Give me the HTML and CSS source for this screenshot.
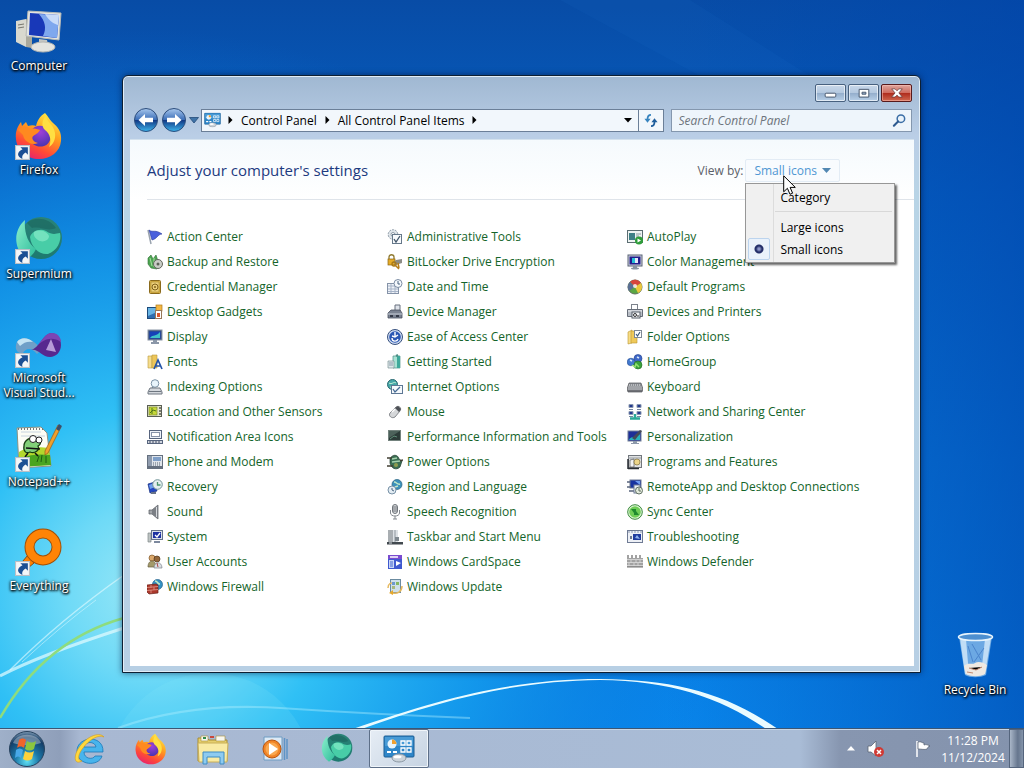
FILE: index.html
```html
<!DOCTYPE html>
<html lang="en">

<head>
  <meta charset="UTF-8">
  <meta name="viewport" content="width=device-width, initial-scale=1.0">
  <title>All Control Panel Items</title>
  <link rel="stylesheet" href="styles.css">
</head>

<body>

  <!-- Shared icons -->
  <svg class="sprites" aria-hidden="true">
    <defs>
      <linearGradient id="ffFlame" x1="0.8" y1="0" x2="0.3" y2="1">
        <stop offset="0" stop-color="#fff04a" />
        <stop offset="0.4" stop-color="#ffa01e" />
        <stop offset="0.75" stop-color="#ff4a36" />
        <stop offset="1" stop-color="#e8226e" />
      </linearGradient>
      <radialGradient id="ffGlobe" cx="0.5" cy="0.3" r="0.7">
        <stop offset="0" stop-color="#a040d8" />
        <stop offset="1" stop-color="#4a34b0" />
      </radialGradient>
      <linearGradient id="smBody" x1="0" y1="0" x2="0" y2="1">
        <stop offset="0" stop-color="#2a8377" />
        <stop offset="1" stop-color="#1d7a70" />
      </linearGradient>
      <linearGradient id="smLight" x1="0" y1="0" x2="1" y2="1">
        <stop offset="0" stop-color="#8cf0cd" />
        <stop offset="1" stop-color="#2dbb99" />
      </linearGradient>
    </defs>
    <symbol id="firefox" viewBox="0 0 48 48">
      <path fill="url(#ffFlame)" d="M30 1c3 3 4 6 7 9 6 5 10 10 9 19C45 40 35 47 24 47 12 47 2 39 1 27 0 19 3 14 6 10l1 4 4-4 2 4c3-1 6-1 8 0 1-5 4-10 9-13z" />
      <path fill="url(#ffGlobe)" d="M16 19c3-6 12-7 17-2 5 5 3 15-4 17-6 2-13-1-14-8l6-4z" />
      <path fill="#ff8a20" d="M3 18c4-4 9-4 12-1 3-1 7 0 10 1-2 4-5 4-7 6-2 3 1 6 5 7-7 3-14-2-15-8z" />
      <path fill="#ffdf42" d="M31 3c0 7 8 9 9 18 1 6-2 12-6 14 3-7 1-13-4-17-4-4-3-10 1-15z" />
    </symbol>
    <symbol id="supermium" viewBox="0 0 48 48">
      <circle cx="26" cy="22" r="21" fill="url(#smBody)" />
      <path fill="url(#smLight)" d="M10 4C-2 14-2 34 12 43c3-2 7-5 9-10C12 27 9 15 10 4z" />
      <path fill="#48cda7" d="M15 21c2-6 10-9 16-6 6 4 9 3 14 2 2 8-3 18-12 21-9 1-17-7-18-17z" />
      <path fill="#86ebc8" opacity="0.7" d="M19 16c5-3 13-1 15 4 0 5-7 7-11 4-3-2-5-5-4-8z" />
      <path fill="#1d685f" d="M12 7c8-7 22-5 29 5-9 4-15-2-24 0z" opacity="0.7" />
    </symbol>
    <symbol id="cpanel" viewBox="0 0 32 28">
      <rect x="1" y="1" width="30" height="21" rx="1" fill="#2f86c8" stroke="#1c5e95" />
      <rect x="2" y="2" width="28" height="9" fill="#5aaae0" opacity="0.6" />
      <circle cx="9" cy="9" r="4.500" fill="#e9f5fc" />
      <path d="M9 9V4.500A4.500 4.500 0 0 1 13.500 9z" fill="#f0a030" />
      <path d="M4 17h4M10 17h4" stroke="#fff" stroke-width="2" />
      <path d="M18 6h4v4h-4zM24 6h4v4h-4zM18 13h4v4h-4zM24 13h4v4h-4z" fill="none" stroke="#fff" stroke-width="1.300" />
      <ellipse cx="16" cy="23" rx="7" ry="4" fill="#cbd3da" stroke="#8b98a4" />
      <ellipse cx="14.500" cy="21.800" rx="4" ry="1.500" fill="#fff" />
    </symbol>
    <symbol id="shortcut" viewBox="0 0 14 14">
      <rect x="0.500" y="0.500" width="13" height="13" fill="#f4f6f8" stroke="#b9bfc6" />
      <path d="M5 2h7v7l-2-2c-2 1-4 3-3 6-5-2-6-6 0-9z" fill="#1b4f94" />
    </symbol>
  </svg>

  <div class="desktop">

    <!-- Wallpaper -->
    <svg class="wallpaper" viewBox="0 0 1024 768" preserveAspectRatio="none" aria-hidden="true">
      <defs>
        <linearGradient id="sky" x1="0" y1="0" x2="0" y2="1">
          <stop offset="0" stop-color="#084ca6" />
          <stop offset="0.25" stop-color="#0661c4" />
          <stop offset="0.6" stop-color="#0778dc" />
          <stop offset="1" stop-color="#0988ee" />
        </linearGradient>
        <radialGradient id="glow" gradientUnits="userSpaceOnUse" cx="150" cy="590" r="560">
          <stop offset="0" stop-color="#9ae8f6" />
          <stop offset="0.15" stop-color="#6fdaf7" />
          <stop offset="0.32" stop-color="#30c0f5" />
          <stop offset="0.6" stop-color="#159cec" stop-opacity="0.8" />
          <stop offset="1" stop-color="#0a70d4" stop-opacity="0" />
        </radialGradient>
        <linearGradient id="shade" x1="0" y1="0" x2="1" y2="0">
          <stop offset="0.65" stop-color="#0048b0" stop-opacity="0" />
          <stop offset="1" stop-color="#0044aa" stop-opacity="0.6" />
        </linearGradient>
      </defs>
      <rect width="1024" height="768" fill="url(#sky)" />
      <rect width="1024" height="768" fill="url(#glow)" />
      <rect width="1024" height="768" fill="url(#shade)" />
      <path d="M560 0h130l120 76H700z" fill="#2b85dc" opacity="0.080" />
      <circle cx="210" cy="775" r="102" fill="#8fe8fa" opacity="0.150" />
      <path d="M118 728Q190 702 280 708T470 718" fill="none" stroke="#b4f0ff" stroke-width="2" opacity="0.400" />
      <path d="M0 676Q40 655 124 628" fill="none" stroke="#e6fcff" stroke-width="3" opacity="0.700" />
      <path d="M10 670Q60 620 124 575" fill="none" stroke="#e6fcff" stroke-width="1.500" opacity="0.600" />
      <path d="M22 662Q62 625 96 600" fill="none" stroke="#e6fcff" stroke-width="1" opacity="0.500" />
      <path d="M0 718Q45 640 124 618" fill="none" stroke="#8edc7e" stroke-width="2.500" />
      <path d="M350 730C450 695 520 679 600 679C675 680 725 692 781 731L769 731C722 698 672 681 600 680C520 681 450 697 356 731z" fill="#e9fbff" />
    </svg>

    <!-- Desktop shortcuts -->
    <ul class="shortcuts">
      <li>
        <a href="#" class="shortcut">
          <svg class="shortcut-icon" viewBox="0 0 48 48">
            <path d="M1 13l10-2v28l-10-5z" fill="#d9d9cf" />
            <path d="M11 11l6 3v26l-6-1z" fill="#aaa99d" />
            <path d="M3 17l6-1M3 20l6-1" stroke="#77776f" />
            <path d="M13 3l33 2-2 27-33-4z" fill="#e4e5e0" stroke="#b7bab8" />
            <path d="M15 5l29 2-2 23-28-3z" fill="#1838b8" />
            <path d="M24 6l20 1-2 23-14-2c4-8 2-15-4-22z" fill="#7fa8ee" />
            <path d="M30 6l14 1-1 10c-4-1-9-4-13-11z" fill="#dce9fb" opacity="0.800" />
            <path d="M24 31l8 1 1 5h-9z" fill="#c4c6c3" />
            <ellipse cx="28" cy="39" rx="12" ry="5" fill="#e3e4e0" stroke="#b4b6b3" />
          </svg>
          <span>Computer</span>
        </a>
      </li>
      <li>
        <a href="#" class="shortcut">
          <svg class="shortcut-icon" viewBox="0 0 48 48">
            <use href="#firefox" width="48" height="48" />
            <use href="#shortcut" y="33" width="15" height="15" />
          </svg>
          <span>Firefox</span>
        </a>
      </li>
      <li>
        <a href="#" class="shortcut">
          <svg class="shortcut-icon" viewBox="0 0 48 48">
            <use href="#supermium" width="48" height="48" />
            <use href="#shortcut" y="33" width="15" height="15" />
          </svg>
          <span>Supermium</span>
        </a>
      </li>
      <li>
        <a href="#" class="shortcut">
          <svg class="shortcut-icon" viewBox="0 0 48 48">
            <path d="M1 25c1-8 11-9 18-3l8 7-5 5c-6-8-12-5-14-1-5 1-8-3-7-8z" fill="#6fa0c8" />
            <path d="M2 22c4-6 12-4 16 0-5-1-9 0-13 4z" fill="#c3e4f4" />
            <path d="M16 30c8-2 12-16 20-17 6 0 10 5 10 12s-5 12-11 12c-8 0-12-9-19-7z" fill="#57288f" />
            <path d="M22 26c5-5 8-13 15-13 6 0 9 5 9 9-9-6-17-3-24 4z" fill="#7c45b4" />
            <path d="M36 19l5 13-10-2z" fill="#b79bd8" />
            <use href="#shortcut" y="33" width="15" height="15" />
          </svg>
          <span>Microsoft Visual Stud...</span>
        </a>
      </li>
      <li>
        <a href="#" class="shortcut">
          <svg class="shortcut-icon" viewBox="0 0 48 48">
            <path d="M2 4l24-1 6 6 4 33-32 2z" fill="#fcfdf5" stroke="#8b9183" />
            <path d="M3 5h25" stroke="#777" stroke-width="2" stroke-dasharray="1 2" />
            <path d="M6 8h20M6 12h24" stroke="#c8d4e0" />
            <path d="M4 28c8-6 22-5 30-4l2 17-32 2z" fill="#b3d72e" />
            <path d="M6 34c10-4 20-4 29-3l1 10-32 2z" fill="#4aa520" />
            <path d="M9 22c0-6 7-10 12-7 5-2 6 5 2 7 2 4-3 8-8 6-4 2-7-1-6-6z" fill="#82cf78" stroke="#173d10" stroke-width="1.300" />
            <circle cx="18" cy="15" r="3.500" fill="#fff" stroke="#222" />
            <circle cx="24" cy="16" r="3" fill="#fff" stroke="#222" />
            <path d="M11 24l14 1M13 29l-3 4M20 29l3 3" stroke="#111" stroke-width="1.500" />
            <path d="M22 38l2-6M26 38l1-7M31 39v-7" stroke="#1e5e10" />
            <path d="M43 1l3 2-13 26-3 2v-4z" fill="#f0a02c" stroke="#9b5a16" stroke-width="0.700" />
            <path d="M41 5l3-5 3 2-3 5z" fill="#3a4f6e" />
            <use href="#shortcut" y="33" width="15" height="15" />
          </svg>
          <span>Notepad++</span>
        </a>
      </li>
      <li>
        <a href="#" class="shortcut">
          <svg class="shortcut-icon" viewBox="0 0 48 48">
            <path d="M13 27l6 8-12 10-5-5z" fill="#ff8000" stroke="#8a4a10" />
            <circle cx="28" cy="19" r="13.500" fill="none" stroke="#a05008" stroke-width="10" />
            <circle cx="28" cy="19" r="13.500" fill="none" stroke="#ff8406" stroke-width="8" />
            <use href="#shortcut" y="33" width="15" height="15" />
          </svg>
          <span>Everything</span>
        </a>
      </li>
    </ul>

    <a href="#" class="shortcut recycle-bin">
      <svg class="shortcut-icon" viewBox="0 0 48 48">
        <path d="M8 5l33 0-6 38c-6 3-16 3-21 0z" fill="#8fc0ec" opacity="0.750" />
        <path d="M9 6l5 36 4 1-3-36zM40 6l-6 36-4 1 4-36z" fill="#e4f3fd" opacity="0.700" />
        <path d="M17 14l5 16M33 16l-10 14M21 12l9 16" stroke="#2b62b8" opacity="0.500" />
        <path d="M13 34c4-4 8-1 11-3s8-1 12 2l-2 9c-5 3-14 3-19 0z" fill="#efe9e2" />
        <path d="M18 36l7 2 6-3M16 40l6 1" stroke="#c28a72" />
        <ellipse cx="24.500" cy="5" rx="17" ry="3.500" fill="#4d8fd0" stroke="#e6f3fc" stroke-width="1.500" />
      </svg>
      <span>Recycle Bin</span>
    </a>

    <!-- Control Panel window -->
    <main class="window">
      <div class="caption">
        <button type="button" class="caption-button" aria-label="Minimize">
          <svg viewBox="0 0 30 16"><rect x="9.500" y="8.500" width="11" height="4" rx="1" fill="#fff" stroke="#46566c" /></svg>
        </button>
        <button type="button" class="caption-button" aria-label="Maximize">
          <svg viewBox="0 0 30 16"><path fill-rule="evenodd" d="M10.500 4.500h10v8h-10zM13.500 7.500v2h4v-2z" fill="#fff" stroke="#46566c" /></svg>
        </button>
        <button type="button" class="caption-button close" aria-label="Close">
          <svg viewBox="0 0 30 16"><path d="M10 4h3.500l2 2 2-2H21l-3.500 4.200L21 12.500h-3.500l-2-2-2 2H10l3.500-4.300z" fill="#fff" stroke="#6b3a3a" stroke-width="0.800" /></svg>
        </button>
      </div>

      <div class="navbar">
        <button type="button" class="travel" aria-label="Back">
          <svg viewBox="0 0 26 26">
            <defs>
              <linearGradient id="orb" x1="0" y1="0" x2="0" y2="1">
                <stop offset="0" stop-color="#a8c8ee" />
                <stop offset="0.480" stop-color="#3d6fb8" />
                <stop offset="0.520" stop-color="#123a86" />
                <stop offset="1" stop-color="#3cb4ec" />
              </linearGradient>
            </defs>
            <circle cx="13" cy="13" r="11.500" fill="url(#orb)" stroke="#2d4d7c" />
            <path d="M5.500 13l6.500-6v3.700h8v4.600h-8V19z" fill="#fff" />
          </svg>
        </button>
        <button type="button" class="travel" aria-label="Forward">
          <svg viewBox="0 0 26 26">
            <circle cx="13" cy="13" r="11.500" fill="url(#orb)" stroke="#2d4d7c" />
            <path d="M20.500 13L14 7v3.700H6v4.600h8V19z" fill="#fff" />
          </svg>
        </button>
        <button type="button" class="history" aria-label="Recent pages">
          <svg viewBox="0 0 10 8"><path d="M0.500 1.500h9L5 7z" fill="#3f74a8" stroke="#234b78" stroke-width="0.800" /></svg>
        </button>

        <nav class="address">
          <svg class="address-icon" viewBox="0 0 32 28"><use href="#cpanel" /></svg>
          <svg class="crumb-arrow" viewBox="0 0 5 8"><path d="M0.500 0l4 4-4 4z" /></svg>
          <a href="#" class="crumb">Control Panel</a>
          <svg class="crumb-arrow" viewBox="0 0 5 8"><path d="M0.500 0l4 4-4 4z" /></svg>
          <a href="#" class="crumb">All Control Panel Items</a>
          <svg class="crumb-arrow" viewBox="0 0 5 8"><path d="M0.500 0l4 4-4 4z" /></svg>
          <button type="button" class="address-drop" aria-label="Previous locations">
            <svg viewBox="0 0 8 5"><path d="M0 0h8L4 4.500z" /></svg>
          </button>
          <button type="button" class="refresh" aria-label="Refresh">
            <svg viewBox="0 0 16 16">
              <path d="M8 2C5 2 4 4 4 7" fill="none" stroke="#3784bf" stroke-width="2" />
              <path d="M0.500 6.500h7L4 11z" fill="#3784bf" />
              <path d="M8 15c3 0 4-2 4-5" fill="none" stroke="#1e5d9c" stroke-width="2" />
              <path d="M8.500 10.500h7L12 6z" fill="#1e5d9c" />
            </svg>
          </button>
        </nav>

        <div class="search">
          <input type="search" aria-label="Search Control Panel" placeholder="Search Control Panel">
          <svg viewBox="0 0 16 16" aria-hidden="true">
            <circle cx="9.500" cy="6" r="4" fill="#e9f3fb" stroke="#3b6ea6" stroke-width="1.600" />
            <path d="M6.500 9L2 13.500" stroke="#2d5a90" stroke-width="2.200" stroke-linecap="round" />
          </svg>
        </div>
      </div>

      <section class="client">
        <header class="page-header">
          <h1>Adjust your computer's settings</h1>
          <div class="view-by">
            <span>View by:</span>
            <div class="view-picker">
              <button type="button" class="view-button" aria-haspopup="true" aria-expanded="true">
                Small icons
                <svg viewBox="0 0 9 5"><path d="M0 0h9L4.500 5z" /></svg>
              </button>
              <div class="menu">
                <label class="menu-item"><input type="radio" name="view"><span>Category</span></label>
                <hr>
                <label class="menu-item"><input type="radio" name="view"><span>Large icons</span></label>
                <label class="menu-item"><input type="radio" name="view" checked><span>Small icons</span></label>
              </div>
              <svg class="cursor" viewBox="0 0 13 20" aria-hidden="true">
                <path d="M0.700 0.800v16l3.700-3.500 2.600 6 2.600-1.100-2.500-5.800h5.200z" fill="#fff" stroke="#000" />
              </svg>
            </div>
          </div>
        </header>

        <ul class="items">
          <li><a href="#"><svg viewBox="0 0 16 16"><path d="M1 1l3 14" stroke="#9aa3ae" stroke-width="1.500" /><path d="M2 1c4 3 6-1 13 4-4 0-5 5-10 6z" fill="#4a60dc" stroke="#27379c" stroke-width="0.600" /></svg>Action Center</a></li>
          <li><a href="#"><svg viewBox="0 0 16 16"><circle cx="6" cy="5.500" r="4.800" fill="#dfe5ea" stroke="#8d9aa6" stroke-dasharray="2 1" /><circle cx="6" cy="5.500" r="2" fill="#fff" stroke="#8d9aa6" /><rect x="5.500" y="5.500" width="9" height="9" fill="#f8fafc" stroke="#66788a" /><path d="M7 10l2 3 4-6" fill="none" stroke="#42566a" stroke-width="1.300" /></svg>Administrative Tools</a></li>
          <li><a href="#"><svg viewBox="0 0 16 16"><rect x="0.500" y="1.500" width="15" height="12" fill="#eef3f2" stroke="#5b6d72" /><rect x="2" y="4" width="6" height="7" fill="#3e7f86" /><path d="M9 5h5M9 7h3" stroke="#8a9aa0" /><circle cx="12" cy="11.500" r="4" fill="#2f9d3a" /><path d="M10.500 9.500v4l3.500-2z" fill="#fff" /></svg>AutoPlay</a></li>
          <li><a href="#"><svg viewBox="0 0 16 16"><path d="M1 4l3-3 2 4 3-4 2 6-1 8-6-1-3-4z" fill="#4da552" stroke="#2b6b33" stroke-width="0.600" /><path d="M3 4l2 8M7 4v9" stroke="#a8e0a0" /><circle cx="11" cy="10" r="4.500" fill="#c9ccc6" stroke="#62665e" /><circle cx="11" cy="10" r="1.500" fill="#5b6156" /></svg>Backup and Restore</a></li>
          <li><a href="#"><svg viewBox="0 0 16 16"><path d="M2 5V3c0-3 5-3 5 0v2" fill="none" stroke="#8f7a30" stroke-width="1.300" /><rect x="1" y="5" width="7" height="6" fill="#e6ac28" stroke="#8b6412" stroke-width="0.700" /><path d="M6 8l3-2 6-1v4l-6 2z" fill="#8d8d87" /><circle cx="7" cy="10" r="2" fill="none" stroke="#a87816" stroke-width="1.300" /><path d="M8 11l4 4M11 9l1 5" stroke="#b67d18" stroke-width="1.500" /></svg>BitLocker Drive Encryption</a></li>
          <li><a href="#"><svg viewBox="0 0 16 16"><rect x="1" y="1" width="14" height="11" fill="#ccd2dc" stroke="#5a6377" /><rect x="2.500" y="2.500" width="11" height="8" fill="#241c8c" /><rect x="5" y="4" width="3" height="5" fill="#23c0d8" /><rect x="8" y="4" width="3" height="5" fill="#e6e6fa" /><path d="M6 12h4v2H6z" fill="#8792a2" /><ellipse cx="8" cy="14.500" rx="4" ry="1" fill="#8792a2" /></svg>Color Management</a></li>
          <li><a href="#"><svg viewBox="0 0 16 16"><rect x="2.500" y="1.500" width="11" height="13" rx="1" fill="#d9b347" stroke="#8a6a1c" /><rect x="4" y="3" width="8" height="10" fill="#ecd07a" stroke="#a3822e" stroke-width="0.600" /><circle cx="8" cy="8" r="3" fill="none" stroke="#80601a" /><circle cx="8" cy="8" r="1" fill="#80601a" /></svg>Credential Manager</a></li>
          <li><a href="#"><svg viewBox="0 0 16 16"><rect x="0.500" y="4.500" width="11" height="10" fill="#eef2f8" stroke="#8593a8" /><path d="M1 7h10M1 10h10M1 12.500h10M4 5v9M8 5v9" stroke="#a7b4c8" /><circle cx="11" cy="4.500" r="4" fill="#f5f9fd" stroke="#7a8ba2" /><path d="M11 2v3h2" fill="none" stroke="#47617f" /></svg>Date and Time</a></li>
          <li><a href="#"><svg viewBox="0 0 16 16"><circle cx="8" cy="8" r="7" fill="#5aa743" stroke="#61705c" /><path d="M8 8L3 3a7 7 0 0 1 11 1z" fill="#d8443c" /><path d="M8 8L3 3a7 7 0 0 0-1 9z" fill="#5a6f94" /><path d="M8 8l6-4c2 4 1 8-3 10z" fill="#ecc73e" /><circle cx="8" cy="7" r="2" fill="#fff" opacity="0.800" /></svg>Default Programs</a></li>
          <li><a href="#"><svg viewBox="0 0 16 16"><rect x="0.500" y="3.500" width="10" height="11" fill="#2f6cae" stroke="#1c4a7a" /><path d="M1 4h9v4L1 12z" fill="#68b4e4" /><rect x="9" y="1" width="6" height="6" fill="#f4b844" stroke="#b07a1a" stroke-width="0.700" /><rect x="8.500" y="6.500" width="6" height="8" fill="#fff" stroke="#98785a" /><path d="M10 9h3v4h-3z" fill="#d9572f" /></svg>Desktop Gadgets</a></li>
          <li><a href="#"><svg viewBox="0 0 16 16"><path d="M8 6V1h5v6" fill="#dfe3ea" stroke="#68707e" /><path d="M1 9l3-3h9l2 3v5H1z" fill="#7b8392" stroke="#4a5160" stroke-width="0.800" /><path d="M1 10h14" stroke="#c6ccd6" /><path d="M3 12h3M9 12h3" stroke="#343a48" stroke-width="2" /></svg>Device Manager</a></li>
          <li><a href="#"><svg viewBox="0 0 16 16"><rect x="4.500" y="0.500" width="6" height="6" fill="#fff" stroke="#7c828b" /><path d="M0.500 5.500h15v7H.5z" fill="#b9bec6" stroke="#666d78" /><path d="M1 7h14" stroke="#eceff2" /><rect x="5" y="8" width="8" height="6" fill="#f5f6f8" stroke="#555c66" /><circle cx="8" cy="11" r="1.500" fill="none" stroke="#333" /><path d="M10 12h2" stroke="#333" /></svg>Devices and Printers</a></li>
          <li><a href="#"><svg viewBox="0 0 16 16"><rect x="1" y="1" width="14" height="10" fill="#39507c" stroke="#8a95a6" /><path d="M2.500 2.500h11v7h-11z" fill="#1641b8" /><path d="M3 9c3-4 6-1 10-6v6z" fill="#3ec2c8" /><path d="M6 11h4v2H6z" fill="#8b97a8" /><path d="M4 14h8" stroke="#8b97a8" stroke-width="2" /></svg>Display</a></li>
          <li><a href="#"><svg viewBox="0 0 16 16"><circle cx="8" cy="8" r="7.500" fill="#cfdcf2" stroke="#37507e" /><circle cx="8" cy="8" r="5.800" fill="#2b58b4" /><path d="M8 3v5M5 7l3 1 3-2M5 9c0 4 5 4 6 1" fill="none" stroke="#fff" stroke-width="1.400" /></svg>Ease of Access Center</a></li>
          <li><a href="#"><svg viewBox="0 0 16 16"><path d="M1 3l4-2v13l-4 1z" fill="#f7dc84" stroke="#b8932f" stroke-width="0.600" /><path d="M4 2h6v12H4z" fill="#efc95a" stroke="#b8932f" stroke-width="0.600" /><rect x="7.500" y="1.500" width="7" height="7" fill="#fff" stroke="#7d8896" /><path d="M9 5l1.500 2L13 3" fill="none" stroke="#3c5878" stroke-width="1.200" /></svg>Folder Options</a></li>
          <li><a href="#"><svg viewBox="0 0 16 16"><path d="M1 2h4v12H1z" fill="#f6dd8c" stroke="#b9973c" stroke-width="0.600" /><path d="M5 1h5v13H5z" fill="#edc65a" stroke="#b9973c" stroke-width="0.600" /><path d="M7 15l4-9 4 9M8.500 12h5" fill="none" stroke="#2454a8" stroke-width="1.700" /></svg>Fonts</a></li>
          <li><a href="#"><svg viewBox="0 0 16 16"><path d="M6 2h7v12H6z" fill="#a9e2d4" stroke="#4e8f86" stroke-width="0.700" /><path d="M10 2h3v12h-3z" fill="#3fa99b" /><path d="M1 7h6v7H1z" fill="#dfe9ea" stroke="#7b9496" stroke-width="0.700" /><path d="M2 9h4M2 11h4" stroke="#89a" /><path d="M9 2l2-1" stroke="#4e8f86" stroke-width="2" /></svg>Getting Started</a></li>
          <li><a href="#"><svg viewBox="0 0 16 16"><circle cx="4" cy="8" r="3.800" fill="#4279cf" stroke="#254c92" stroke-width="0.600" /><circle cx="11" cy="4.500" r="4" fill="#3f68c8" stroke="#243f8a" stroke-width="0.600" /><circle cx="11" cy="11" r="4" fill="#3aa23a" stroke="#1f6a25" stroke-width="0.600" /><path d="M5 11l3 2 1-3 3 3" fill="none" stroke="#92e070" stroke-width="1.500" /><path d="M3 6l2 1M10 3l2 1" stroke="#d7e7fb" stroke-width="1.500" /></svg>HomeGroup</a></li>
          <li><a href="#"><svg viewBox="0 0 16 16"><circle cx="8" cy="4.500" r="3.800" fill="#e8f4fb" stroke="#7c93a6" /><path d="M6 8l-2 3" stroke="#7c93a6" stroke-width="1.500" /><path d="M1 13l2-4h10l2 4v2H1z" fill="#d4d8dd" stroke="#6e7680" /><path d="M2 12.500h12" stroke="#6e7680" /></svg>Indexing Options</a></li>
          <li><a href="#"><svg viewBox="0 0 16 16"><circle cx="5.500" cy="5.500" r="5" fill="#46a8a8" stroke="#2a6870" /><path d="M2 4c3 2 5-2 7 0M3 8l4 1" stroke="#c7f0d8" fill="none" /><rect x="4.500" y="6.500" width="11" height="8" fill="#f6f9fc" stroke="#5d7794" /><path d="M6 10l2 3 5-5" fill="none" stroke="#466b94" stroke-width="1.300" /></svg>Internet Options</a></li>
          <li><a href="#"><svg viewBox="0 0 16 16"><path d="M2 4h12l2 6-1 3H1l-1-3z" fill="#8b8e93" stroke="#515459" stroke-width="0.700" /><path d="M2 6h12M1.500 8h13M1.500 10h13" stroke="#e5e7ea" stroke-dasharray="1 1" /><path d="M1 12h14" stroke="#54575c" /></svg>Keyboard</a></li>
          <li><a href="#"><svg viewBox="0 0 16 16"><rect x="0.500" y="1.500" width="14" height="11" fill="#e4e7c8" stroke="#5a5f54" /><rect x="2" y="3" width="8" height="8" fill="#c5d838" stroke="#6e7a28" stroke-width="0.600" /><path d="M3 9l3-3 3 1M5 4v6" stroke="#4d7419" fill="none" /><path d="M12 4h2M12 7h2M12 10h2" stroke="#555" stroke-width="1.500" /></svg>Location and Other Sensors</a></li>
          <li><a href="#"><svg viewBox="0 0 16 16"><path d="M3 9l6-6c3-2 6 1 4 4l-5 6c-3 2-7-1-5-4z" fill="#d5d7d9" stroke="#6c7075" stroke-width="0.800" /><path d="M8 4l4 4 2-3-3-3z" fill="#4c5055" /><path d="M5 8l3-3" stroke="#fff" stroke-width="1.500" /></svg>Mouse</a></li>
          <li><a href="#"><svg viewBox="0 0 16 16"><path d="M2 0.500h4v3H2zM10 0.500h4v3h-4zM2 7.500h4v3H2zM10 7.500h4v3h-4z" fill="#23388c" stroke="#8998b0" /><path d="M2 5.500h4M10 5.500h4M2 12.500h4M10 12.500h4" stroke="#7787a0" /><path d="M8 10v4M3 14.500h10" stroke="#2ba897" stroke-width="2.500" /></svg>Network and Sharing Center</a></li>
          <li><a href="#"><svg viewBox="0 0 16 16"><rect x="2.500" y="1.500" width="12" height="8" fill="#edf2f9" stroke="#57657e" /><rect x="4.500" y="3.500" width="8" height="4" fill="#fff" stroke="#8793a8" /><rect x="0.500" y="11.500" width="15" height="3" fill="#d0d5de" stroke="#57657e" /><path d="M2 13h12" stroke="#414b62" stroke-dasharray="2 1" /></svg>Notification Area Icons</a></li>
          <li><a href="#"><svg viewBox="0 0 16 16"><rect x="1.500" y="1.500" width="12" height="10" fill="#2c3b38" stroke="#73827d" /><path d="M2 2h11l-11 7z" fill="#4d625b" /><path d="M3 10l4-3 3 1" stroke="#5f8d78" fill="none" /></svg>Performance Information and Tools</a></li>
          <li><a href="#"><svg viewBox="0 0 16 16"><rect x="1" y="2" width="13" height="10" fill="#1d2f98" stroke="#717f96" /><path d="M2 11c2-5 6-1 11-6v6z" fill="#27b2bd" /><path d="M5 9l8-8 2 1-7 9z" fill="#454a58" /><path d="M6 12h4v2H6zM4 14h8v1H4z" fill="#8e9aab" /></svg>Personalization</a></li>
          <li><a href="#"><svg viewBox="0 0 16 16"><rect x="0.500" y="1.500" width="15" height="11" fill="#dfe4ea" stroke="#65707f" /><path d="M2 2v10M4 2v10" stroke="#76849a" stroke-width="1.500" /><rect x="6" y="3" width="8" height="4" fill="#7f9fc8" /><path d="M6 9h8M6 11h8" stroke="#5b6675" stroke-dasharray="1 1" /><path d="M0 14h16" stroke="#65707f" stroke-width="2" /></svg>Phone and Modem</a></li>
          <li><a href="#"><svg viewBox="0 0 16 16"><path d="M3 5c2-5 8-5 9 0l3 2-2 6c-4 4-9 1-10-4z" fill="#3b6e53" stroke="#1f3b2e" stroke-width="0.700" /><path d="M0 4h5M0 12h6M12 7l4-1" stroke="#423f33" stroke-width="1.500" /><path d="M5 5l5-1M5 8l8-1" stroke="#a5d2ae" stroke-width="1.500" /><circle cx="9" cy="11" r="2" fill="#8f9d4e" /></svg>Power Options</a></li>
          <li><a href="#"><svg viewBox="0 0 16 16"><rect x="1.500" y="1.500" width="13" height="12" fill="#dfe1e2" stroke="#72777d" /><path d="M1 4h13" stroke="#969ca3" /><path d="M3 6l4-1v8H3z" fill="#f1f2f3" stroke="#555" stroke-width="0.700" /><circle cx="10" cy="8" r="3" fill="#ecd58a" stroke="#8b7b45" stroke-width="0.800" /><path d="M1 15V5M1 14.500h11" stroke="#292d33" stroke-width="1.500" /></svg>Programs and Features</a></li>
          <li><a href="#"><svg viewBox="0 0 16 16"><path d="M1 5l7-2 2 9-7 2z" fill="#2448c0" stroke="#142c80" stroke-width="0.700" /><path d="M2 6l5-2 1 4-5 2z" fill="#6fa0f0" /><circle cx="10.500" cy="5.500" r="4.800" fill="#e5eff0" stroke="#719497" /><path d="M10.500 3v3h3" stroke="#4b956c" stroke-width="1.300" fill="none" /><path d="M4 14h5" stroke="#69748a" stroke-width="2" /></svg>Recovery</a></li>
          <li><a href="#"><svg viewBox="0 0 16 16"><circle cx="10" cy="5.500" r="5" fill="#3c91bb" stroke="#27617e" stroke-width="0.700" /><path d="M7 3c3 0 3 3 6 2M8 8l3-1" stroke="#bfe8c8" stroke-width="1.500" fill="none" /><circle cx="5" cy="11" r="4" fill="#e2ecf3" stroke="#7891a6" /><path d="M5 9v2l2 1" stroke="#4a6580" fill="none" /></svg>Region and Language</a></li>
          <li><a href="#"><svg viewBox="0 0 16 16"><rect x="3" y="1" width="11" height="8" fill="#1732a0" stroke="#6e7b95" /><path d="M8 2h5v4z" fill="#6f9cf2" /><path d="M0 3h3M0 8h4M2 12h5" stroke="#58647c" stroke-width="1.500" /><rect x="7" y="6" width="6" height="8" fill="#e9eef5" stroke="#6e7b95" /><circle cx="12" cy="11.500" r="3.500" fill="#e3ebdc" stroke="#606f63" /><path d="M12 9v3h2" fill="none" stroke="#606f63" /></svg>RemoteApp and Desktop Connections</a></li>
          <li><a href="#"><svg viewBox="0 0 16 16"><path d="M2 6h3l6-5v14l-6-5H2z" fill="#a4a7ab" stroke="#55595f" stroke-width="0.700" /><path d="M5 6l6-5v14l-6-5z" fill="#7b7f85" /><path d="M9.500 3v10" stroke="#d5d8dc" /></svg>Sound</a></li>
          <li><a href="#"><svg viewBox="0 0 16 16"><rect x="5.500" y="0.500" width="5" height="9" rx="2.500" fill="#d7dadd" stroke="#70757b" /><path d="M6 3h4M6 5h4M6 7h4" stroke="#70757b" /><path d="M3.500 6v3c0 4 9 4 9 0V6M8 12v3M6 15h4" fill="none" stroke="#83888e" /></svg>Speech Recognition</a></li>
          <li><a href="#"><svg viewBox="0 0 16 16"><circle cx="8" cy="8" r="7.300" fill="#e1f5d8" stroke="#3a8a3c" /><circle cx="8" cy="8" r="5.800" fill="#6fcd56" /><path d="M4 5h5v2l3 4H7V9z" fill="#1f8a2e" /></svg>Sync Center</a></li>
          <li><a href="#"><svg viewBox="0 0 16 16"><path d="M1 4h3v9H1z" fill="#bec4c3" stroke="#7e8788" stroke-width="0.700" /><rect x="4.500" y="1.500" width="11" height="9" fill="#dbe0e9" stroke="#66738b" /><rect x="6" y="3" width="8" height="6" fill="#1e32a2" /><path d="M8 6l2 2 3-4" fill="none" stroke="#fff" stroke-width="1.300" /><path d="M7 13h6" stroke="#7d899e" stroke-width="2" /></svg>System</a></li>
          <li><a href="#"><svg viewBox="0 0 16 16"><rect x="1" y="1" width="5" height="12" fill="#a9aeb2" /><rect x="6" y="1" width="5" height="12" fill="#dde1e5" /><path d="M8 1v12" stroke="#8f979e" /><rect x="8" y="8" width="4" height="4" fill="#7f888f" /><rect x="0" y="13" width="16" height="2.500" fill="#42494f" /><path d="M2 14h3" stroke="#d3d8dc" /></svg>Taskbar and Start Menu</a></li>
          <li><a href="#"><svg viewBox="0 0 16 16"><rect x="0.500" y="1.500" width="15" height="12" fill="#edf0f6" stroke="#6f7b94" /><path d="M1 3h14" stroke="#8d9ab2" stroke-dasharray="2 1" /><rect x="6" y="5" width="8" height="6" fill="#203c9e" /><path d="M8 9l2-3 3 4z" fill="#8fb2ee" /><rect x="3" y="7" width="2" height="3" fill="#6f7b94" /></svg>Troubleshooting</a></li>
          <li><a href="#"><svg viewBox="0 0 16 16"><circle cx="5" cy="4" r="3" fill="#dba86b" stroke="#7c5426" stroke-width="0.700" /><path d="M1 13c0-8 8-8 8 0z" fill="#a39a6a" stroke="#675f3f" stroke-width="0.700" /><circle cx="10" cy="5" r="3" fill="#94673a" stroke="#4e341a" stroke-width="0.700" /><path d="M7 14c0-7 8-7 8 0z" fill="#d9dde2" stroke="#7d858e" stroke-width="0.700" /><path d="M10 9l1 4" stroke="#a44" /></svg>User Accounts</a></li>
          <li><a href="#"><svg viewBox="0 0 16 16"><rect x="1" y="1" width="14" height="14" fill="#3f59cf" /><path d="M1 1h14v4H1z" fill="#7b4bd0" /><path d="M3 3h8" stroke="#fff" stroke-width="1.500" /><rect x="2" y="6" width="5" height="8" fill="#c9d6f8" /><path d="M3 8h3M3 10h3M3 12h3" stroke="#4567cc" /><path d="M9 7l5 2-5 3z" fill="#fff" /></svg>Windows CardSpace</a></li>
          <li><a href="#"><svg viewBox="0 0 16 16"><path d="M0 1h2v3h2V1h2v3h2V1h2v3h2V1h2v3h2v9H0z" fill="#a2a2a2" /><path d="M0 5.500h16M0 8.500h16M0 11.500h16M4 6v3M9 6v3M13 6v3M2 9v3M7 9v3M11 9v3" stroke="#dcdcdc" stroke-width="0.800" /><path d="M0 13h16" stroke="#777" /></svg>Windows Defender</a></li>
          <li><a href="#"><svg viewBox="0 0 16 16"><circle cx="10.500" cy="5.500" r="5" fill="#3592c4" stroke="#225e86" stroke-width="0.700" /><path d="M8 2c3 0 2 3 5 3" stroke="#c5ecc5" stroke-width="1.500" fill="none" /><path d="M0 6l9-1 2 1v8l-9 1-2-2z" fill="#ac392c" stroke="#6b2118" stroke-width="0.700" /><path d="M0 8.500l11-1M0 11.500l11-1M4 6v3M7 8v3M4 11v3" stroke="#e0988c" stroke-width="0.800" /></svg>Windows Firewall</a></li>
          <li><a href="#"><svg viewBox="0 0 16 16"><rect x="3.500" y="0.500" width="10" height="13" fill="#cfe0ea" stroke="#6b8ba0" /><path d="M5 3h3v3H5z" fill="#6d9ad0" /><path d="M9 3h3v3H9z" fill="#86b860" /><path d="M5 7h3v3H5z" fill="#a9b87c" /><path d="M1 9c0-5 4-5 4-5M15 7c0 6-5 8-9 7" fill="none" stroke="#e6b85c" stroke-width="1.500" /><path d="M6 11v5l-4-2z" fill="#e6a82c" /></svg>Windows Update</a></li>
        </ul>
      </section>
    </main>
  </div>

  <!-- Taskbar -->
  <footer class="taskbar">
    <button type="button" class="start" aria-label="Start">
      <svg viewBox="0 0 38 38">
        <defs>
          <radialGradient id="startOrb" cx="0.5" cy="0.85" r="0.85">
            <stop offset="0" stop-color="#5fe0f4" />
            <stop offset="0.4" stop-color="#1c78a8" />
            <stop offset="0.8" stop-color="#133c66" />
            <stop offset="1" stop-color="#7f9bb5" />
          </radialGradient>
        </defs>
        <circle cx="19" cy="19" r="17.500" fill="url(#startOrb)" stroke="#27425e" />
        <path d="M5 13c4-11 24-11 28 0-9 3-19 3-28 0z" fill="#fff" opacity="0.350" />
        <path d="M11 10c2-2 5-2 7 0l-2 8c-2-2-5-2-7 0z" fill="#f0642a" />
        <path d="M19 11c3 2 6 2 9 0l-2 8c-3 2-6 2-9 0z" fill="#8bc63f" />
        <path d="M8 20c3-2 5-2 7 0l-2 8c-2-2-4-2-6 0z" fill="#48a8e8" />
        <path d="M17 21c3 2 6 2 9 0l-2 8c-3 2-6 2-9 0z" fill="#fdd23c" />
      </svg>
    </button>
    <div class="tasks">
      <button type="button" class="task" aria-label="Internet Explorer">
        <svg viewBox="0 0 32 32">
          <path d="M30 19H11c0 7 9 8 11 4h7C26 34 4 33 4 18 4 3 31 1 30 19zM11 14h12c-1-6-11-6-12 0z" fill="#48b4ec" stroke="#1c78b8" stroke-width="0.800" />
          <path d="M31 4c-5-6-19 0-26 12-5 9-3 16 4 12-5 0-4-7 1-13C16 7 25 1 31 4z" fill="#ffd83c" stroke="#d79a18" stroke-width="0.600" />
        </svg>
      </button>
      <button type="button" class="task" aria-label="Firefox">
        <svg viewBox="0 0 48 48"><use href="#firefox" /></svg>
      </button>
      <button type="button" class="task" aria-label="Windows Explorer">
        <svg viewBox="0 0 32 32">
          <path d="M1 5h9l2 2h18v21H1z" fill="#e6cf6c" stroke="#a78d35" />
          <path d="M4 3h7v5H4zM19 3h9v5h-9z" fill="#f7f7ee" stroke="#a78d35" stroke-width="0.600" />
          <path d="M6 5h3" stroke="#2f8a4c" stroke-width="2" />
          <path d="M13 4h4" stroke="#c9483a" stroke-width="2" />
          <path d="M1 10h30l-1 19H2z" fill="#f9eba4" stroke="#c8ae58" />
          <path d="M6 31V19h21v12h-4v-7H10v7z" fill="#8ecbf0" stroke="#3f8cc4" />
        </svg>
      </button>
      <button type="button" class="task" aria-label="Windows Media Player">
        <svg viewBox="0 0 32 32">
          <path d="M5 4h18v23H5z" fill="#dceaf6" stroke="#6f9cc2" />
          <path d="M25.500 5v22M28 6v20" stroke="#5e94c6" stroke-width="1.500" />
          <circle cx="13" cy="16" r="9" fill="#f08426" stroke="#b8540e" />
          <circle cx="13" cy="16" r="6.500" fill="#f9a850" />
          <path d="M10 10v12l9-6z" fill="#fff" />
        </svg>
      </button>
      <button type="button" class="task" aria-label="Supermium">
        <svg viewBox="0 0 48 48"><use href="#supermium" /></svg>
      </button>
      <button type="button" class="task active" aria-label="Control Panel">
        <svg viewBox="0 0 32 28"><use href="#cpanel" /></svg>
      </button>
    </div>
    <div class="tray">
      <button type="button" aria-label="Show hidden icons">
        <svg class="tray-arrow" viewBox="0 0 8 5"><path d="M0 4.500L4 0l4 4.500z" fill="#fff" /></svg>
      </button>
      <button type="button" aria-label="Volume muted">
        <svg class="tray-icon" viewBox="0 0 18 18">
          <path d="M1 6h3l5-5v15l-5-4H1z" fill="#fff" stroke="#5b6575" stroke-width="0.800" />
          <circle cx="12" cy="12" r="5" fill="#d03a34" />
          <path d="M10 10l4 4M14 10l-4 4" stroke="#fff" stroke-width="1.500" />
        </svg>
      </button>
      <button type="button" class="tray-flag" aria-label="Action Center">
        <svg class="tray-icon" viewBox="0 0 18 18">
          <path d="M4 1v16" stroke="#fff" stroke-width="1.500" />
          <path d="M5 2c3-1 4 1 6 1v2c2-1 4 0 6 1-2 0-2 2-3 3-2 1-6 0-9 0z" fill="#fff" stroke="#4f5a6b" stroke-width="0.700" />
        </svg>
      </button>
      <time class="clock" datetime="2024-11-12T23:28"><span>11:28 PM</span><span>11/12/2024</span></time>
      <button type="button" class="show-desktop" aria-label="Show desktop"></button>
    </div>
  </footer>

</body>

</html>
```

FILE: styles.css
```css
* {
  box-sizing: border-box;
}

body {
  display: flex;
  flex-direction: column;
  height: 100vh;
  margin: 0;
  overflow: hidden;
  font-family: "Open Sans", "Noto Sans", sans-serif;
  font-size: 12px;
  line-height: 15px;
  color: #000;
}

button {
  margin: 0;
  padding: 0;
  border: none;
  background: none;
  font: inherit;
  color: inherit;
}

a {
  color: inherit;
  text-decoration: none;
}

ul {
  list-style: none;
  margin: 0;
  padding: 0;
}

svg {
  display: block;
}

.sprites {
  position: absolute;
  width: 0;
  height: 0;
}

/* Desktop */
.desktop {
  position: relative;
  flex: 1;
  min-height: 0;
}

.wallpaper {
  position: absolute;
  top: 0;
  left: 0;
  width: 100vw;
  height: 100vh;
}

.shortcuts {
  position: relative;
  width: 78px;
}

.shortcuts li {
  height: 104px;
}

.shortcut {
  display: flex;
  flex-direction: column;
  align-items: center;
  gap: 2px;
  padding-top: 8px;
  width: 78px;
  color: #fff;
  text-align: center;
  text-shadow: 1px 1px 2px #000, 0 1px 3px #000, 0 0 3px rgba(0, 0, 0, 0.8);
}

.shortcut-icon {
  width: 48px;
  height: 48px;
}

.recycle-bin {
  position: absolute;
  right: 10px;
  bottom: 31px;
}

/* Window */
.window {
  position: absolute;
  top: 75px;
  right: 103px;
  bottom: 55px;
  left: 122px;
  display: flex;
  flex-direction: column;
  padding: 0 6px 6px 7px;
  border: 1px solid #0d1f33;
  border-radius: 6px 6px 0 0;
  background: linear-gradient(#a0b8d2, #bacee6 60px, #b8d4e6 120px, #b7cfe4);
  box-shadow: inset 0 0 0 1px #e2edf6, 0 0 6px rgba(0, 20, 60, 0.6);
}

.caption {
  display: flex;
  justify-content: flex-end;
  gap: 2px;
  height: 31px;
  padding: 8px 2px 0 0;
}

.caption-button {
  width: 31px;
  height: 18px;
  border: 1px solid #48617f;
  border-radius: 2px;
  background: linear-gradient(#c9d8ea, #b3c8df 50%, #93adcb 50%, #b8d0e8);
  box-shadow: inset 0 0 0 1px rgba(255, 255, 255, 0.6);
}

.caption-button.close {
  border-color: #571a1c;
  background: linear-gradient(#dda59d, #cf6a5d 50%, #ae2a1c 50%, #d06850);
  box-shadow: inset 0 0 0 1px rgba(255, 200, 190, 0.5);
}

.navbar {
  display: flex;
  align-items: center;
  height: 32px;
  padding: 0 2px 6px 3px;
}

.travel {
  width: 26px;
  height: 26px;
  margin-right: 2px;
}

.history {
  width: 10px;
  margin-right: 2px;
}

.address {
  display: flex;
  align-items: center;
  flex: 1;
  height: 23px;
  padding-left: 2px;
  border: 1px solid #6b7f98;
  background: #f2f7fc;
}

.address-icon {
  width: 17px;
  height: 16px;
  margin-right: 7px;
}

.crumb-arrow {
  width: 5px;
  height: 8px;
}

.crumb {
  margin: 0 8px;
}

.address-drop {
  display: flex;
  align-items: center;
  justify-content: center;
  width: 20px;
  margin-left: auto;
}

.address-drop svg {
  width: 8px;
  height: 5px;
}

.refresh {
  display: flex;
  align-items: center;
  justify-content: center;
  align-self: stretch;
  width: 25px;
  border-left: 1px solid #6b7f98;
}

.refresh svg {
  width: 14px;
  height: 14px;
}

.search {
  display: flex;
  align-items: center;
  width: 31%;
  height: 23px;
  margin-left: 7px;
  padding: 0 4px 0 7px;
  border: 1px solid #8497ae;
  background: #eef5fb;
}

.search input {
  flex: 1;
  min-width: 0;
  padding: 0;
  border: none;
  outline: none;
  background: none;
  font: inherit;
  font-style: italic;
}

.search input::placeholder {
  color: #6d747c;
  opacity: 1;
}

.search svg {
  width: 15px;
  height: 15px;
}

.client {
  flex: 1;
  min-height: 0;
  border-top: 1px solid #d4e2ee;
  background: linear-gradient(#f5fafd, #fff 60px);
}

.page-header {
  display: flex;
  align-items: center;
  justify-content: space-between;
  height: 60px;
  margin-left: 17px;
  padding-right: 74px;
  border-bottom: 1px solid #dfe4ea;
}

h1 {
  margin: 0;
  font-size: 15px;
  font-weight: 400;
  line-height: 20px;
  color: #1d3a80;
}

.view-by {
  display: flex;
  align-items: center;
  gap: 2px;
  padding-top: 2px;
  color: #5a6068;
}

.view-picker {
  position: relative;
}

.view-button {
  display: flex;
  align-items: center;
  gap: 5px;
  height: 23px;
  padding: 0 8px;
  border: 1px solid #e3ecf5;
  border-radius: 2px;
  background: #f8fbfe;
  color: #4f97d3;
}

.view-button svg {
  width: 9px;
  height: 5px;
  fill: #5187b2;
}

/* View menu */
.menu {
  position: absolute;
  top: 24px;
  left: 0;
  width: 150px;
  padding: 2px;
  border: 1px solid #979797;
  background: linear-gradient(90deg, #f0f0f0 27px, #dcdcdc 27px, #dcdcdc 28px, #f0f0f0 28px);
  box-shadow: 2px 2px 2px rgba(0, 0, 0, 0.6);
  color: #000;
}

.menu hr {
  height: 1px;
  margin: 3px 0 4px 27px;
  border: none;
  background: #d8d8d8;
}

.menu-item {
  display: flex;
  align-items: center;
  gap: 10px;
  height: 22px;
}

.menu-item input {
  appearance: none;
  width: 22px;
  height: 22px;
  margin: 0;
}

.menu-item input:checked {
  border: 1px solid #bcd4ee;
  border-radius: 2px;
  background: radial-gradient(circle at 10px 10px, #8c96c8 1px, #25306a 3px, #25306a 4px, #eaf2fb 5px);
}

.cursor {
  position: absolute;
  top: 16px;
  left: 38px;
  width: 13px;
  height: 20px;
}

/* Control panel items */
.items {
  display: grid;
  grid-template-columns: repeat(3, 240px);
  margin: 24px 0 0 17px;
  color: #14642a;
}

.items a {
  display: flex;
  align-items: center;
  gap: 4px;
  height: 25px;
  white-space: nowrap;
}

.items svg {
  width: 16px;
  height: 16px;
}

/* Taskbar */
.taskbar {
  position: relative;
  display: flex;
  align-items: center;
  height: 40px;
  border-top: 1px solid #3c5674;
  background: linear-gradient(90deg, #9fb0c9, #8f9fba 60px, #a8b8d2 80px, #a9bcd6 800px, #8796b0 840px, #8493ad);
  box-shadow: inset 0 1px 0 #c7d6e6;
}

.start {
  width: 54px;
  margin-right: 5px;
}

.start svg {
  width: 38px;
  height: 38px;
  margin: 0 auto;
}

.tasks {
  display: flex;
  gap: 2px;
  height: 39px;
}

.task {
  display: flex;
  align-items: center;
  justify-content: center;
  width: 60px;
}

.task svg {
  width: 32px;
  height: 32px;
}

.task.active {
  border: 1px solid #5d6f88;
  border-radius: 2px;
  background: linear-gradient(135deg, #e6edf5, #c6d3e2);
  box-shadow: inset 0 0 0 1px #f0f5fa;
}

.tray {
  display: flex;
  align-items: center;
  align-self: stretch;
  margin-left: auto;
  color: #fff;
}

.tray-arrow {
  width: 8px;
  height: 5px;
  margin-right: 12px;
}

.tray-icon {
  width: 18px;
  height: 18px;
}

.tray-flag {
  margin-left: 28px;
}

.clock {
  display: flex;
  flex-direction: column;
  align-items: center;
  width: 72px;
  margin-left: 6px;
  line-height: 17px;
}

.show-desktop {
  align-self: stretch;
  width: 15px;
  border: 1px solid #55657d;
  background: linear-gradient(90deg, #a9b6c8, #66768e 60%, #8494aa);
}
```
